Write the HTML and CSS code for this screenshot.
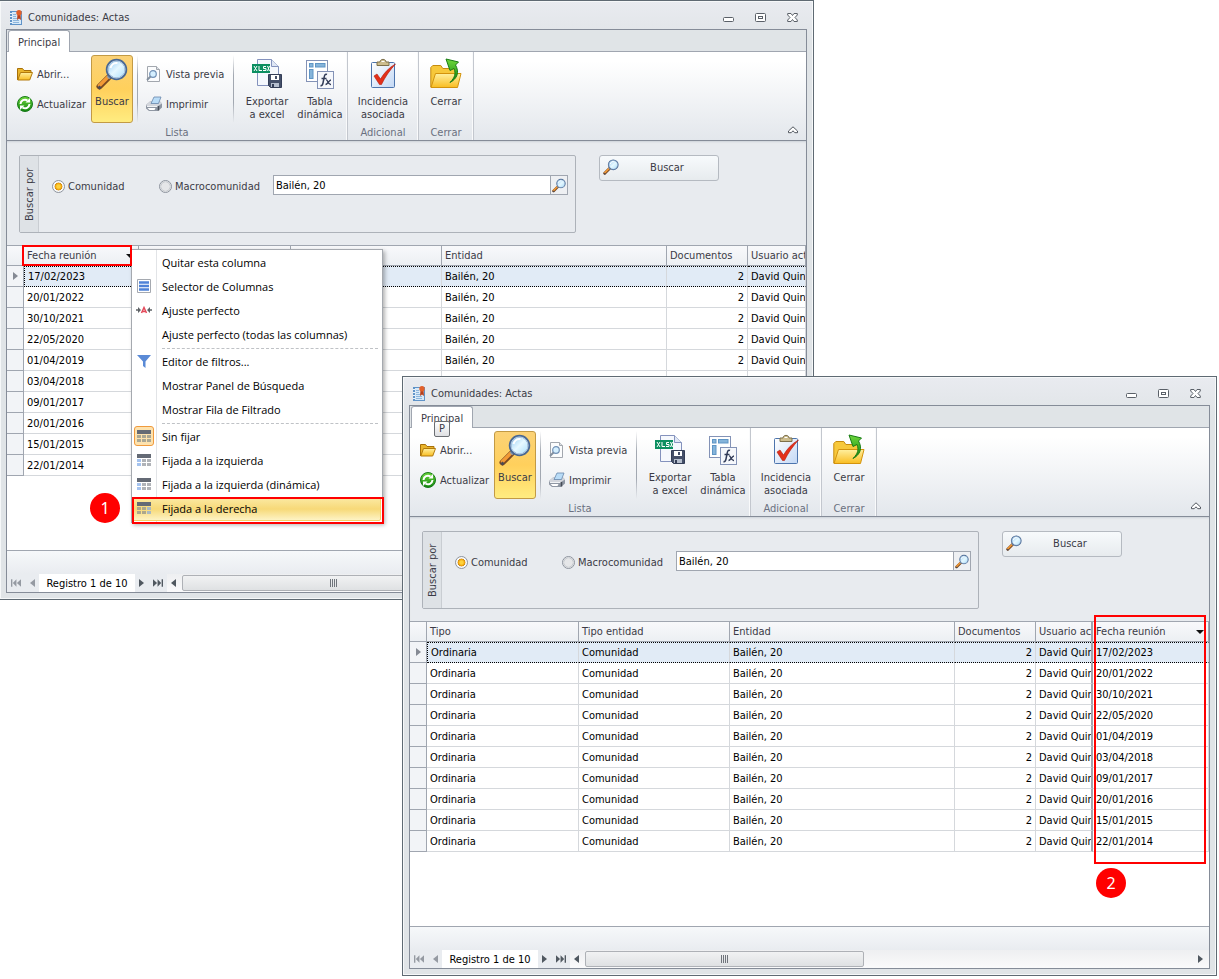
FILE: index.html
```
<!DOCTYPE html>
<html lang="es">
<head>
    <meta charset="utf-8">
    <title>Comunidades: Actas</title>
    <link rel="stylesheet" href="styles.css">
</head>
<body>
    <!-- Shared icons -->
    <svg class="sprite" aria-hidden="true">
        <defs>
            <linearGradient id="g-glass" x1="0" y1="0" x2="1" y2="1"><stop offset="0" stop-color="#8cc8f4"/><stop offset="0.5" stop-color="#e6f8ff"/><stop offset="1" stop-color="#a5dcfa"/></linearGradient>
            <linearGradient id="g-folder" x1="0" y1="0" x2="0" y2="1"><stop offset="0" stop-color="#fff0a0"/><stop offset="1" stop-color="#f9bd21"/></linearGradient>
            <linearGradient id="g-paper" x1="0" y1="0" x2="1" y2="1"><stop offset="0" stop-color="#ffffff"/><stop offset="1" stop-color="#c3d8f5"/></linearGradient>
            <linearGradient id="g-green" x1="0" y1="0" x2="0" y2="1"><stop offset="0" stop-color="#6fd83c"/><stop offset="1" stop-color="#11850f"/></linearGradient>
        </defs>
        <symbol id="i-book" viewBox="0 0 16 16">
            <rect x="2" y="1" width="12" height="14" fill="#5f93c8"/><rect x="4" y="2" width="9" height="12" fill="#d7e9f8"/>
            <path d="M2 3.500h2M2 6.500h2M2 9.500h2M2 12.500h2" stroke="#e9f4fc"/><path d="M5 4.500h3M5 6.500h3M5 8.500h4M5 10.500h6M5 12.500h6" stroke="#8db6dc"/>
            <path d="M9.500 4L9 10l2-1.500 2 1.500-.5-6z" fill="#b8401c"/><circle cx="11" cy="2.800" r="2.700" fill="#e2602a"/>
        </symbol>
        <symbol id="i-open" viewBox="0 0 16 16">
            <path d="M.5 14V2.500h5l1.500 2h7v3" fill="#e9b52c" stroke="#a87008"/><path d="M.8 14L3.500 6.500h12L12.700 14z" fill="url(#g-folder)" stroke="#b37a0c"/>
        </symbol>
        <symbol id="i-refresh" viewBox="0 0 16 16">
            <circle cx="8" cy="8" r="7.500" fill="url(#g-green)" stroke="#197a1b"/>
            <path d="M3.500 8A4.500 4.500 0 0 1 10.500 4.500" fill="none" stroke="#fff" stroke-width="2"/><path d="M8.500 6.500h4.500v-4.500z" fill="#fff"/>
            <path d="M12.500 8A4.500 4.500 0 0 1 5.500 11.500" fill="none" stroke="#fff" stroke-width="2"/><path d="M7.500 9.500H3V14z" fill="#fff"/>
        </symbol>
        <symbol id="i-search" viewBox="0 0 32 32">
            <path d="M3.500 28.500L13 19" stroke="#7c4a22" stroke-width="6" stroke-linecap="round"/>
            <path d="M3.500 27.500L12 19" stroke="#f39a35" stroke-width="3.500" stroke-linecap="round"/>
            <path d="M2.500 28.500l2 2" stroke="#4a4a55" stroke-width="3"/><path d="M12 20l3-3" stroke="#8c9aab" stroke-width="3.500"/>
            <circle cx="20.500" cy="11.500" r="9.500" fill="url(#g-glass)" stroke="#496893" stroke-width="2.500"/>
            <circle cx="20.500" cy="11.500" r="8.600" fill="none" stroke="#bcd5ec"/>
            <path d="M14.500 10a6.500 6.500 0 0 1 7-5" fill="none" stroke="#fff" stroke-width="2"/>
        </symbol>
        <symbol id="i-preview" viewBox="0 0 16 16">
            <path d="M1.500.5h9l3 3v12h-12z" fill="#fbfcfd" stroke="#a2a7ae"/><path d="M10.500.5v3h3" fill="#dde1e5" stroke="#a2a7ae"/>
            <circle cx="7" cy="8" r="3.300" fill="#d4efff" stroke="#7090b5" stroke-width="1.200"/><path d="M4.500 10.500L1 14" stroke="#8390a0" stroke-width="2"/>
        </symbol>
        <symbol id="i-print" viewBox="0 0 16 16">
            <path d="M0 9l4-3.500h10l2 2v4L12 15H3l-3-2.500z" fill="#8f97a3"/><path d="M0 9l4-3.500h10l2 2L12 10H1z" fill="#d3d6dc"/>
            <path d="M5 7.500L8 1h7l-2.500 6.500z" fill="#b9dcf7" stroke="#6787ab" stroke-width=".8"/>
            <path d="M1 10.500h10.500" stroke="#f1f3f5"/><path d="M1.500 12h8l-1 2H3.500z" fill="#fff"/><path d="M12.500 10v4.500" stroke="#454c57" stroke-width="1.500"/>
        </symbol>
        <symbol id="i-xlsx" viewBox="0 0 32 32">
            <path d="M6.500 1.500h14l7 7v19h-21z" fill="#f5f8fd" stroke="#8492bd"/><path d="M20.500 1.500v7h7" fill="#dfe7f5" stroke="#8492bd"/>
            <rect x="1" y="6" width="18" height="9" fill="#0c8f61"/>
            <path d="M3 8l3 5M6 8l-3 5M8 8v4.500h3M15 8.500h-2.500v2H15v2h-3M16.500 8l2 5M18.500 8l-2 5" fill="none" stroke="#fff"/>
            <path d="M17.500 16.500h13v13h-11l-2-2z" fill="#455069" stroke="#343e57"/><rect x="20" y="17" width="8" height="5" fill="#fff"/><rect x="24" y="18" width="2" height="3" fill="#455069"/><rect x="20" y="25" width="8" height="4" fill="#b6bfce"/><rect x="21" y="26" width="2" height="3" fill="#343e57"/>
        </symbol>
        <symbol id="i-pivot" viewBox="0 0 32 32">
            <rect x="2.500" y="2.500" width="21" height="21" fill="#fff" stroke="#8392b6"/>
            <rect x="5.500" y="5.500" width="3.500" height="3.500" fill="#85b4da" stroke="#5f95c5"/><rect x="11.500" y="5.500" width="9.500" height="3.500" fill="#85b4da" stroke="#5f95c5"/><rect x="5.500" y="11.500" width="3.500" height="9" fill="#85b4da" stroke="#5f95c5"/>
            <rect x="13.500" y="13.500" width="16" height="17" fill="#f6f8fc" stroke="#8392b6"/>
            <path d="M23 16.500c-2-1-2.500 1-3 3.500l-1 5c-.4 2-1.200 3-2.500 2.500M17.500 20.500h5" fill="none" stroke="#323c58" stroke-width="1.500"/><path d="M22 22c2-.5 2 5 5 4.500M27 22c-2 0-3.500 4.500-5.500 4.500" fill="none" stroke="#323c58" stroke-width="1.300"/>
        </symbol>
        <symbol id="i-check" viewBox="0 0 32 32">
            <rect x="4.500" y="4.500" width="23" height="25" rx="1" fill="url(#g-paper)" stroke="#4c74ad"/>
            <path d="M10 7.500V4h3c0-3.500 6-3.500 6 0h3v3.500z" fill="#cdbd8d" stroke="#7d704b"/><path d="M14.500 3.500h3" stroke="#fff"/>
            <path d="M7 18l3-2 3.500 5C17 15 22 9.500 28.500 6 23 12 18 19 14.500 26.500h-2z" fill="#e3301b" stroke="#b11c0e" stroke-width=".6"/>
        </symbol>
        <symbol id="i-close-folder" viewBox="0 0 32 32">
            <path d="M.8 29V9.500l2-2h8l2 3h13V29z" fill="#f7c83b" stroke="#c58b0e"/><path d="M1 29.500l4.500-14h25.500l-3.500 14z" fill="url(#g-folder)" stroke="#d3930d"/>
            <path d="M20 24.500c5-5 6-9 4-14l-4 2L16 1l12.500 3-3 3c4 7 2 13.500-5.500 17.500z" fill="url(#g-green)" stroke="#187c14"/>
        </symbol>
        <symbol id="i-collapse" viewBox="0 0 10 8"><path d="M.5 5L5 .8 9.500 5v1.700H6.800L5 4.800 3.200 6.700H.5z" fill="#fff" stroke="#50565e"/></symbol>
        <symbol id="i-min" viewBox="0 0 11 11"><rect x=".5" y="5.500" width="10" height="4" rx="1" fill="#fff" stroke="#5a6068"/></symbol>
        <symbol id="i-max" viewBox="0 0 11 11"><rect x=".5" y="1.500" width="10" height="8" rx="1" fill="#fff" stroke="#5a6068"/><rect x="3.500" y="4.500" width="4" height="2" fill="#fff" stroke="#5a6068"/></symbol>
        <symbol id="i-x" viewBox="0 0 11 11"><path d="M.7 1.500H4l1.500 2 1.500-2h3.300v1.500L8 5.500l2.300 2.500v1.500H7L5.500 7.500 4 9.500H.7V8L3 5.500.7 3z" fill="#fff" stroke="#5a6068"/></symbol>
        <symbol id="i-first" viewBox="0 0 11 8"><path d="M0 0h1.500v8H0zM6 0v8L2 4zM11 0v8L6.500 4z"/></symbol>
        <symbol id="i-last" viewBox="0 0 11 8"><path d="M11 0H9.500v8H11zM5 0v8l4-4zM0 0v8l4.500-4z"/></symbol>
        <symbol id="i-prev" viewBox="0 0 5 8"><path d="M5 0v8L0 4z"/></symbol>
        <symbol id="i-next" viewBox="0 0 5 8"><path d="M0 0v8l5-4z"/></symbol>
        <symbol id="i-columns" viewBox="0 0 16 16"><path d="M1.500 1.500h13v13h-13z" fill="#fff" stroke="#a5a9b0"/><path d="M3 4.500h10M3 8h10M3 11.500h10" stroke="#4f82d8" stroke-width="2.500"/></symbol>
        <symbol id="i-fit" viewBox="0 0 16 16"><path d="M0 8h4M16 8h-4" stroke="#5e6266" stroke-width="1.500"/><path d="M2 5l3 3-3 3zM14 5l-3 3 3 3z" fill="#5e6266"/><path d="M5.500 11L8 5.500 10.500 11M6.500 9.500h3" fill="none" stroke="#e34a5a" stroke-width="1.500"/></symbol>
        <symbol id="i-filter" viewBox="0 0 16 16"><path d="M1 2h14L9.500 8.500V15L7 13V8.500z" fill="#5a8ad6"/></symbol>
        <symbol id="i-pin" viewBox="0 0 16 16"><path d="M1 2h14v4H1z" fill="#646a75"/><path d="M1 7h4v3H1zM6 7h4v3H6zM11 7h4v3h-4zM1 11h4v3H1zM6 11h4v3H6zM11 11h4v3h-4z" fill="#aaa794"/></symbol>
        <symbol id="i-pin-left" viewBox="0 0 16 16"><path d="M1 2h14v4H1z" fill="#646a75"/><path d="M6 7h4v3H6zM11 7h4v3h-4zM6 11h4v3H6zM11 11h4v3h-4z" fill="#b0b3b8"/><path d="M1 7h4v3H1zM1 11h4v3H1z" fill="#a5c3ef"/></symbol>
        <symbol id="i-pin-right" viewBox="0 0 16 16"><path d="M1 2h14v4H1z" fill="#646a75"/><path d="M1 7h4v3H1zM6 7h4v3H6zM1 11h4v3H1zM6 11h4v3H6z" fill="#aca78c"/><path d="M11 7h4v3h-4zM11 11h4v3h-4z" fill="#a9b9c2"/></symbol>
    </svg>

    <main class="desktop">
        <!-- Window 1: context menu open -->
        <section class="window window-menu">
            <header class="titlebar">
                <svg class="icon-16"><use href="#i-book"/></svg>
                <h1>Comunidades: Actas</h1>
                <div class="window-buttons">
                    <button type="button" aria-label="Minimizar"><svg><use href="#i-min"/></svg></button>
                    <button type="button" aria-label="Maximizar"><svg><use href="#i-max"/></svg></button>
                    <button type="button" aria-label="Cerrar ventana"><svg><use href="#i-x"/></svg></button>
                </div>
            </header>
            <div class="frame">
                <nav class="tabs"><button type="button" class="tab">Principal</button></nav>
                <div class="ribbon">
                    <div class="group">
                        <div class="group-items">
                            <div class="stack">
                                <button type="button" class="small-btn"><svg class="icon-16"><use href="#i-open"/></svg>Abrir...</button>
                                <button type="button" class="small-btn"><svg class="icon-16"><use href="#i-refresh"/></svg>Actualizar</button>
                            </div>
                            <button type="button" class="big-btn active"><svg class="icon-32"><use href="#i-search"/></svg>Buscar</button>
                            <div class="stack divided">
                                <button type="button" class="small-btn"><svg class="icon-16"><use href="#i-preview"/></svg>Vista previa</button>
                                <button type="button" class="small-btn"><svg class="icon-16"><use href="#i-print"/></svg>Imprimir</button>
                            </div>
                            <button type="button" class="big-btn wide"><svg class="icon-32"><use href="#i-xlsx"/></svg><span>Exportar<br>a excel</span></button>
                            <button type="button" class="big-btn"><svg class="icon-32"><use href="#i-pivot"/></svg><span>Tabla<br>dinámica</span></button>
                        </div>
                        <div class="caption">Lista</div>
                    </div>
                    <div class="group">
                        <div class="group-items"><button type="button" class="big-btn wider"><svg class="icon-32"><use href="#i-check"/></svg><span>Incidencia<br>asociada</span></button></div>
                        <div class="caption">Adicional</div>
                    </div>
                    <div class="group">
                        <div class="group-items"><button type="button" class="big-btn"><svg class="icon-32"><use href="#i-close-folder"/></svg>Cerrar</button></div>
                        <div class="caption">Cerrar</div>
                    </div>
                    <button type="button" class="collapse" aria-label="Contraer"><svg><use href="#i-collapse"/></svg></button>
                </div>
                <form class="search">
                    <div class="search-panel">
                        <div class="search-title">Buscar por</div>
                        <div class="search-fields">
                            <label class="radio"><input type="radio" name="tipo1" checked>Comunidad</label>
                            <label class="radio"><input type="radio" name="tipo1">Macrocomunidad</label>
                            <div class="lookup">
                                <input type="text" value="Bailén, 20" aria-label="Entidad">
                                <button type="button" aria-label="Elegir"><svg><use href="#i-search"/></svg></button>
                            </div>
                        </div>
                    </div>
                    <button type="button" class="search-btn"><svg class="icon-16"><use href="#i-search"/></svg><span>Buscar</span></button>
                </form>
                <div class="grid">
                    <table>
                        <colgroup><col class="c-mark"><col class="c-date"><col class="c-type"><col class="c-kind"><col class="c-entity"><col class="c-docs"><col></colgroup>
                        <thead>
                            <tr><th></th><th>Fecha reunión<i class="sort"></i></th><th></th><th></th><th>Entidad</th><th>Documentos</th><th>Usuario act</th></tr>
                        </thead>
                        <tbody>
                            <tr class="selected"><td><svg class="arrow"><use href="#i-next"/></svg></td><td>17/02/2023</td><td></td><td></td><td>Bailén, 20</td><td class="num">2</td><td>David Quint</td></tr>
                            <tr><td></td><td>20/01/2022</td><td></td><td></td><td>Bailén, 20</td><td class="num">2</td><td>David Quint</td></tr>
                            <tr><td></td><td>30/10/2021</td><td></td><td></td><td>Bailén, 20</td><td class="num">2</td><td>David Quint</td></tr>
                            <tr><td></td><td>22/05/2020</td><td></td><td></td><td>Bailén, 20</td><td class="num">2</td><td>David Quint</td></tr>
                            <tr><td></td><td>01/04/2019</td><td></td><td></td><td>Bailén, 20</td><td class="num">2</td><td>David Quint</td></tr>
                            <tr><td></td><td>03/04/2018</td><td></td><td></td><td></td><td></td><td></td></tr>
                            <tr><td></td><td>09/01/2017</td><td></td><td></td><td></td><td></td><td></td></tr>
                            <tr><td></td><td>20/01/2016</td><td></td><td></td><td></td><td></td><td></td></tr>
                            <tr><td></td><td>15/01/2015</td><td></td><td></td><td></td><td></td><td></td></tr>
                            <tr><td></td><td>22/01/2014</td><td></td><td></td><td></td><td></td><td></td></tr>
                        </tbody>
                    </table>
                </div>
                <div class="summary"></div>
                <footer class="navigator">
                    <div class="nav-buttons">
                        <button type="button" class="off" aria-label="Primero"><svg class="double"><use href="#i-first"/></svg></button>
                        <button type="button" class="off" aria-label="Anterior"><svg><use href="#i-prev"/></svg></button>
                    </div>
                    <span class="record">Registro 1 de 10</span>
                    <div class="nav-buttons">
                        <button type="button" aria-label="Siguiente"><svg><use href="#i-next"/></svg></button>
                        <button type="button" aria-label="Último"><svg class="double"><use href="#i-last"/></svg></button>
                    </div>
                    <div class="scrollbar">
                        <button type="button" aria-label="Desplazar a la izquierda"><svg><use href="#i-prev"/></svg></button>
                        <div class="thumb"><i class="grip"></i></div>
                        <button type="button" aria-label="Desplazar a la derecha"><svg><use href="#i-next"/></svg></button>
                    </div>
                </footer>
            </div>
        </section>

        <div class="menu">
            <button type="button">Quitar esta columna</button>
            <button type="button"><svg class="icon-16"><use href="#i-columns"/></svg>Selector de Columnas</button>
            <button type="button"><svg class="icon-16"><use href="#i-fit"/></svg>Ajuste perfecto</button>
            <button type="button">Ajuste perfecto (todas las columnas)</button>
            <hr>
            <button type="button"><svg class="icon-16"><use href="#i-filter"/></svg>Editor de filtros...</button>
            <button type="button">Mostrar Panel de Búsqueda</button>
            <button type="button">Mostrar Fila de Filtrado</button>
            <hr>
            <button type="button" class="checked"><svg class="icon-16"><use href="#i-pin"/></svg>Sin fijar</button>
            <button type="button"><svg class="icon-16"><use href="#i-pin-left"/></svg>Fijada a la izquierda</button>
            <button type="button"><svg class="icon-16"><use href="#i-pin-left"/></svg>Fijada a la izquierda (dinámica)</button>
            <button type="button" class="hover"><svg class="icon-16"><use href="#i-pin-right"/></svg>Fijada a la derecha</button>
        </div>

        <!-- Window 2: column fixed to the right -->
        <section class="window window-result">
            <header class="titlebar">
                <svg class="icon-16"><use href="#i-book"/></svg>
                <h1>Comunidades: Actas</h1>
                <div class="window-buttons">
                    <button type="button" aria-label="Minimizar"><svg><use href="#i-min"/></svg></button>
                    <button type="button" aria-label="Maximizar"><svg><use href="#i-max"/></svg></button>
                    <button type="button" aria-label="Cerrar ventana"><svg><use href="#i-x"/></svg></button>
                </div>
            </header>
            <div class="frame">
                <nav class="tabs"><button type="button" class="tab">Principal<kbd class="keytip">P</kbd></button></nav>
                <div class="ribbon">
                    <div class="group">
                        <div class="group-items">
                            <div class="stack">
                                <button type="button" class="small-btn"><svg class="icon-16"><use href="#i-open"/></svg>Abrir...</button>
                                <button type="button" class="small-btn"><svg class="icon-16"><use href="#i-refresh"/></svg>Actualizar</button>
                            </div>
                            <button type="button" class="big-btn active"><svg class="icon-32"><use href="#i-search"/></svg>Buscar</button>
                            <div class="stack divided">
                                <button type="button" class="small-btn"><svg class="icon-16"><use href="#i-preview"/></svg>Vista previa</button>
                                <button type="button" class="small-btn"><svg class="icon-16"><use href="#i-print"/></svg>Imprimir</button>
                            </div>
                            <button type="button" class="big-btn wide"><svg class="icon-32"><use href="#i-xlsx"/></svg><span>Exportar<br>a excel</span></button>
                            <button type="button" class="big-btn"><svg class="icon-32"><use href="#i-pivot"/></svg><span>Tabla<br>dinámica</span></button>
                        </div>
                        <div class="caption">Lista</div>
                    </div>
                    <div class="group">
                        <div class="group-items"><button type="button" class="big-btn wider"><svg class="icon-32"><use href="#i-check"/></svg><span>Incidencia<br>asociada</span></button></div>
                        <div class="caption">Adicional</div>
                    </div>
                    <div class="group">
                        <div class="group-items"><button type="button" class="big-btn"><svg class="icon-32"><use href="#i-close-folder"/></svg>Cerrar</button></div>
                        <div class="caption">Cerrar</div>
                    </div>
                    <button type="button" class="collapse" aria-label="Contraer"><svg><use href="#i-collapse"/></svg></button>
                </div>
                <form class="search">
                    <div class="search-panel">
                        <div class="search-title">Buscar por</div>
                        <div class="search-fields">
                            <label class="radio"><input type="radio" name="tipo2" checked>Comunidad</label>
                            <label class="radio"><input type="radio" name="tipo2">Macrocomunidad</label>
                            <div class="lookup">
                                <input type="text" value="Bailén, 20" aria-label="Entidad">
                                <button type="button" aria-label="Elegir"><svg><use href="#i-search"/></svg></button>
                            </div>
                        </div>
                    </div>
                    <button type="button" class="search-btn"><svg class="icon-16"><use href="#i-search"/></svg><span>Buscar</span></button>
                </form>
                <div class="grid">
                    <table class="fixed-right">
                        <colgroup><col class="c-mark"><col class="c-type"><col class="c-kind"><col class="c-entity"><col class="c-docs"><col class="c-user"><col></colgroup>
                        <thead>
                            <tr><th></th><th>Tipo</th><th>Tipo entidad</th><th>Entidad</th><th>Documentos</th><th>Usuario act</th><th>Fecha reunión<i class="sort"></i></th></tr>
                        </thead>
                        <tbody>
                            <tr class="selected"><td><svg class="arrow"><use href="#i-next"/></svg></td><td>Ordinaria</td><td>Comunidad</td><td>Bailén, 20</td><td class="num">2</td><td>David Quin</td><td>17/02/2023</td></tr>
                            <tr><td></td><td>Ordinaria</td><td>Comunidad</td><td>Bailén, 20</td><td class="num">2</td><td>David Quin</td><td>20/01/2022</td></tr>
                            <tr><td></td><td>Ordinaria</td><td>Comunidad</td><td>Bailén, 20</td><td class="num">2</td><td>David Quin</td><td>30/10/2021</td></tr>
                            <tr><td></td><td>Ordinaria</td><td>Comunidad</td><td>Bailén, 20</td><td class="num">2</td><td>David Quin</td><td>22/05/2020</td></tr>
                            <tr><td></td><td>Ordinaria</td><td>Comunidad</td><td>Bailén, 20</td><td class="num">2</td><td>David Quin</td><td>01/04/2019</td></tr>
                            <tr><td></td><td>Ordinaria</td><td>Comunidad</td><td>Bailén, 20</td><td class="num">2</td><td>David Quin</td><td>03/04/2018</td></tr>
                            <tr><td></td><td>Ordinaria</td><td>Comunidad</td><td>Bailén, 20</td><td class="num">2</td><td>David Quin</td><td>09/01/2017</td></tr>
                            <tr><td></td><td>Ordinaria</td><td>Comunidad</td><td>Bailén, 20</td><td class="num">2</td><td>David Quin</td><td>20/01/2016</td></tr>
                            <tr><td></td><td>Ordinaria</td><td>Comunidad</td><td>Bailén, 20</td><td class="num">2</td><td>David Quin</td><td>15/01/2015</td></tr>
                            <tr><td></td><td>Ordinaria</td><td>Comunidad</td><td>Bailén, 20</td><td class="num">2</td><td>David Quin</td><td>22/01/2014</td></tr>
                        </tbody>
                    </table>
                </div>
                <div class="summary"></div>
                <footer class="navigator">
                    <div class="nav-buttons">
                        <button type="button" class="off" aria-label="Primero"><svg class="double"><use href="#i-first"/></svg></button>
                        <button type="button" class="off" aria-label="Anterior"><svg><use href="#i-prev"/></svg></button>
                    </div>
                    <span class="record">Registro 1 de 10</span>
                    <div class="nav-buttons">
                        <button type="button" aria-label="Siguiente"><svg><use href="#i-next"/></svg></button>
                        <button type="button" aria-label="Último"><svg class="double"><use href="#i-last"/></svg></button>
                    </div>
                    <div class="scrollbar">
                        <button type="button" aria-label="Desplazar a la izquierda"><svg><use href="#i-prev"/></svg></button>
                        <div class="thumb"><i class="grip"></i></div>
                        <button type="button" aria-label="Desplazar a la derecha"><svg><use href="#i-next"/></svg></button>
                    </div>
                </footer>
            </div>
        </section>

        <!-- Step marks -->
        <div class="mark mark-header"></div>
        <div class="mark mark-item"></div>
        <div class="mark mark-column"></div>
        <span class="step step-1">1</span>
        <span class="step step-2">2</span>
    </main>
</body>
</html>
```

FILE: styles.css
```
:root {
    --text: #3b3b46;
    --muted: #6a7080;
    --line: #a0a6b0;
    --row-line: #d5d8dc;
    --frame: #858c98;
    --outer: #5f6a73;
    --bg: #e8ebef;
    --red: #ff0000;
}

* { box-sizing: border-box; }

body {
    margin: 0;
    background: #fff;
    color: var(--text);
    font: 11px/13px "DejaVu Sans Condensed", "DejaVu Sans", sans-serif;
}

button, input { font: inherit; color: inherit; }
button { margin: 0; padding: 0; border: 0; background: none; }
svg { display: block; flex: none; }
.sprite { position: absolute; width: 0; height: 0; }
.icon-16 { width: 16px; height: 16px; }
.icon-32 { width: 32px; height: 32px; }

.desktop { position: relative; min-height: 100vh; overflow: hidden; }

/* --- WINDOW --- */
.window {
    position: absolute;
    width: 815px;
    padding: 0 6px 6px;
    border: 1px solid var(--outer);
    background: linear-gradient(#e9ebf0, #e0e4e7 40px);
    box-shadow: inset 0 0 0 1px #f6f8f9;
}
.window-menu { left: -1px; top: 0; }
.window-result { left: 402px; top: 376px; }

.titlebar { display: flex; align-items: center; gap: 4px; height: 28px; padding: 5px 5px 0 2px; }
.titlebar h1 { flex: 1; margin: 0; font-size: 11px; font-weight: normal; }
.window-buttons { display: flex; gap: 21px; padding-right: 4px; }
.window-buttons svg { width: 11px; height: 11px; }

.frame { border: 1px solid var(--frame); background: var(--bg); }

/* --- RIBBON --- */
.tabs { display: flex; height: 22px; background: #e0e4e7; border-bottom: 1px solid var(--line); }
.tab {
    position: relative;
    height: 22px;
    margin-left: 1px;
    padding: 2px 9px 0;
    border: 1px solid var(--line);
    border-bottom: 0;
    border-radius: 3px 3px 0 0;
    background: #fff;
}
.keytip {
    position: absolute;
    left: 22px;
    top: 14px;
    z-index: 1;
    width: 16px;
    height: 16px;
    border: 1px solid #6b6e73;
    border-radius: 2px;
    background: linear-gradient(#fff, #dfe0e3);
    font: inherit;
    line-height: 14px;
}

.ribbon {
    display: flex;
    height: 89px;
    border-bottom: 1px solid var(--frame);
    background: linear-gradient(#fff 10%, #e3e7ec);
}
.group { padding: 3px 4px 0; border-right: 1px solid #c3c7ce; box-shadow: inset -1px 0 0 #f9fafb; }
.group-items { display: flex; height: 68px; }
.caption { height: 17px; line-height: 19px; text-align: center; color: var(--muted); }
.stack { width: 80px; padding-top: 4px; }
.divided {
    width: 97px;
    margin: 0 3px 0 4px;
    padding-left: 3px;
    background: linear-gradient(transparent, #a2a8b1 30%, #a2a8b1 70%, transparent) left / 1px 100% no-repeat,
                linear-gradient(transparent, #a2a8b1 30%, #a2a8b1 70%, transparent) right / 1px 100% no-repeat;
}
.small-btn { display: flex; align-items: center; gap: 4px; height: 30px; padding-left: 6px; white-space: nowrap; }
.big-btn {
    display: flex;
    flex-direction: column;
    align-items: center;
    justify-content: flex-start;
    gap: 5px;
    width: 46px;
    padding-top: 2px;
    border: 1px solid transparent;
    border-radius: 3px;
    text-align: center;
    white-space: nowrap;
}
.big-btn.wide { width: 60px; }
.big-btn.wider { width: 62px; }
.big-btn.active { width: 42px; border-color: #c29a45; background: linear-gradient(#fbd277, #ffd05c 50%, #ffec80); }
.collapse { margin: auto 8px 6px auto; }
.collapse svg { width: 10px; height: 8px; }

/* --- SEARCH FORM --- */
.search { display: flex; align-items: flex-start; gap: 23px; padding: 14px 12px 12px; box-shadow: inset 0 2px 2px -1px #cdd2d8; }
.search-panel { display: flex; width: 557px; height: 78px; border: 1px solid #adb2b9; border-radius: 2px; }
.search-title {
    width: 19px;
    padding-right: 2px;
    border-left: 1px solid #c9cdd2;
    background: #dee2e6;
    writing-mode: vertical-rl;
    transform: rotate(180deg);
    line-height: 16px;
    text-align: center;
}
.search-fields { flex: 1; display: flex; align-items: flex-start; padding: 19px 7px 0 13px; }
.radio { display: flex; align-items: center; gap: 3px; height: 23px; width: 107px; }
.radio input {
    appearance: none;
    width: 13px;
    height: 13px;
    margin: 0;
    border: 1px solid #8e949e;
    border-radius: 50%;
    background: radial-gradient(#e5e6e8 50%, #bfc3c8 60%, #f3f4f5 70%);
}
.radio input:checked { background: radial-gradient(#ffd23c 20%, #eda20c 40%, #c88620 48%, #f8f9fa 54%); }
.lookup { flex: 1; display: flex; height: 20px; margin-left: 7px; border: 1px solid var(--line); background: #fff; }
.lookup input { flex: 1; min-width: 0; padding: 0 2px; border: 0; background: none; color: #000; }
.lookup button { width: 17px; padding: 1px; border-left: 1px solid var(--line); background: #eef0f3; }
.lookup svg { width: 14px; height: 15px; }
.search-btn {
    display: flex;
    align-items: center;
    width: 120px;
    height: 26px;
    padding: 0 3px 2px;
    border: 1px solid #b5bac1;
    border-radius: 3px;
    background: linear-gradient(#f7fafc, #e7ebee);
}
.search-btn span { flex: 1; }

/* --- DATA GRID --- */
.grid { height: 305px; overflow: hidden; background: #fff; border-top: 1px solid var(--line); }
table { width: 100%; table-layout: fixed; border-spacing: 0; }
.c-mark { width: 17px; }
.c-date { width: 115px; }
.c-type { width: 152px; }
.c-kind { width: 151px; }
.c-entity { width: 225px; }
.c-docs { width: 81px; }
.c-user { width: 57px; }
th, td { height: 21px; padding: 0 3px; overflow: hidden; white-space: nowrap; text-align: left; }
th {
    position: relative;
    height: 20px;
    border: solid var(--line);
    border-width: 0 1px 1px 0;
    background: linear-gradient(#f8f9fb, #eceff3);
    font-weight: normal;
}
td { border: solid var(--row-line); border-width: 0 1px 1px 0; color: #000; }
td:first-child { border-color: var(--line); background: #f2f4f7; }
td.num { text-align: right; }
th:last-child, td:last-child { padding-right: 0; }
.selected td:not(:first-child) { border-top: 1px dotted #000; border-bottom: 1px dotted #000; background: #e1ebf6; }
.selected td:nth-child(2) { border-left: 1px dotted #000; }
.arrow { width: 5px; height: 8px; margin: auto; fill: #858a94; }
.sort { position: absolute; right: 4px; top: 8px; border: 4px solid transparent; border-top-color: #111; border-bottom: 0; }
.fixed-right tr > :nth-child(6) { border-right: 2px solid var(--line); padding-right: 0; }

.summary { height: 24px; border-top: 1px solid var(--line); background: linear-gradient(#f6f8fa, #e9ecf0); }

/* --- NAVIGATOR --- */
.navigator { display: flex; height: 18px; fill: #505860; }
.nav-buttons { display: flex; width: 32px; align-items: center; justify-content: space-around; background: #e9ecf0; }
.navigator svg { width: 5px; height: 8px; }
.navigator .double { width: 10px; }
.nav-buttons .off { fill: #959aa2; }
.record { width: 96px; padding: 0 5px; background: #fff; color: #000; line-height: 19px; text-align: center; white-space: nowrap; }
.scrollbar { flex: 1; display: flex; align-items: center; padding: 0 6px 0 4px; background: linear-gradient(#eeeff1, #fafafb); }
.thumb {
    display: flex;
    align-items: center;
    justify-content: center;
    width: 279px;
    height: 16px;
    margin: 0 auto 0 6px;
    border: 1px solid #aeb1b6;
    border-radius: 2px;
    background: linear-gradient(#f1f2f3, #dfe1e3);
}
.window-menu .thumb { width: 302px; }
.grip { width: 7px; height: 8px; background: repeating-linear-gradient(90deg, #70757c 0 1px, transparent 1px 2px); }

/* --- CONTEXT MENU --- */
.menu {
    position: absolute;
    left: 131px;
    top: 249px;
    width: 252px;
    padding: 1px 1px 1px 0;
    border: 1px solid #a5a9af;
    background: linear-gradient(#e2e4e7, #e2e4e7) 24px 0 / 1px 100% no-repeat #fff;
    box-shadow: 2px 2px 4px rgba(0, 0, 0, 0.3);
    color: #000;
    font-family: "Open Sans", sans-serif;
}
.menu button { position: relative; display: flex; align-items: center; width: 100%; height: 24px; padding: 0 0 2px 30px; }
.menu svg { position: absolute; left: 4px; }
.menu hr { height: 1px; margin: 1px 3px 1px 30px; border: 0; border-top: 1px dashed #bfc2c6; }
.menu .checked svg { left: 2px; width: 20px; height: 20px; padding: 1px; border: 1px solid #f09a3d; border-radius: 3px; background: #fde2ae; }
.menu .hover { border: 1px solid #f4d068; border-radius: 2px; padding-left: 29px; background: linear-gradient(#fbe9a3, #f7d978 50%, #fdf3c4); }
.menu .hover svg { left: 3px; }

/* --- STEP MARKS --- */
.mark { position: absolute; border: 2px solid var(--red); }
.mark-header { left: 22px; top: 245px; width: 110px; height: 21px; }
.mark-item { left: 132px; top: 497px; width: 252px; height: 27px; }
.mark-column { left: 1094px; top: 615px; width: 112px; height: 249px; }
.step {
    position: absolute;
    width: 30px;
    border-radius: 50%;
    background: var(--red);
    color: #fff;
    font: 16px/30px "Noto Sans", sans-serif;
    text-align: center;
}
.step-1 { left: 90px; top: 493px; }
.step-2 { left: 1096px; top: 868px; }
```
